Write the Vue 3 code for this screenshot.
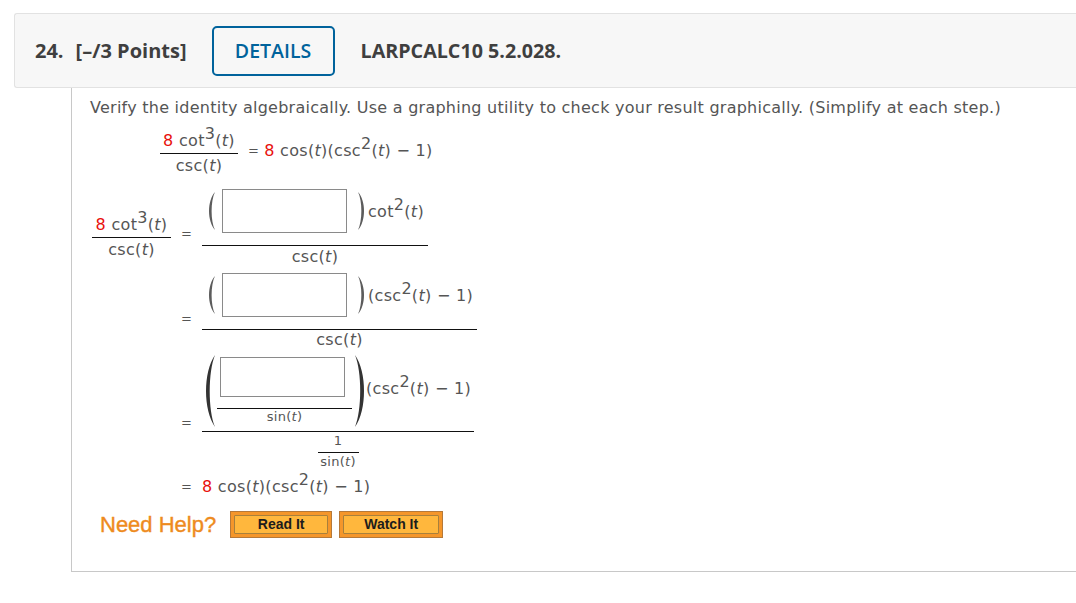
<template>
  <div class="page">
    <header class="question-head">
      <span class="num">24.</span>
      <span class="points">[–/3 Points]</span>
      <button class="details">DETAILS</button>
      <span class="code">LARPCALC10 5.2.028.</span>
    </header>

    <section class="question-body">
      <p class="prompt">Verify the identity algebraically. Use a graphing utility to check your result graphically. (Simplify at each step.)</p>

      <div class="identity">
        <div class="frac lhs">
          <div class="top"><span class="red">8</span> cot<sup>3</sup>(<i>t</i>)</div>
          <div class="bot">csc(<i>t</i>)</div>
        </div>
        <span class="eq-inline">=</span>
        <span class="rhs"><span class="red">8</span> cos(<i>t</i>)(csc<sup>2</sup>(<i>t</i>) − 1)</span>
      </div>

      <div class="steps">
        <div class="step step-a">
          <div class="frac lhs second">
            <div class="top"><span class="red">8</span> cot<sup>3</sup>(<i>t</i>)</div>
            <div class="bot">csc(<i>t</i>)</div>
          </div>
          <span class="eq">=</span>
          <div class="frac big">
            <div class="top row">
              <svg class="paren" width="16" height="38" viewBox="0 0 16 38"><path d="M10 0C2 9 2 29 10 38C5.500 29 5.500 9 10 0Z" /></svg>
              <input class="answer" type="text" />
              <svg class="paren close" width="16" height="38" viewBox="0 0 16 38"><path d="M5 0C13 9 13 29 5 38C9.500 29 9.500 9 5 0Z" /></svg>
              <span class="tail">cot<sup>2</sup>(<i>t</i>)</span>
            </div>
            <div class="bot">csc(<i>t</i>)</div>
          </div>
        </div>

        <div class="step step-b">
          <div class="spacer"></div>
          <span class="eq">=</span>
          <div class="frac big">
            <div class="top row">
              <svg class="paren" width="16" height="38" viewBox="0 0 16 38"><path d="M10 0C2 9 2 29 10 38C5.500 29 5.500 9 10 0Z" /></svg>
              <input class="answer" type="text" />
              <svg class="paren close" width="16" height="38" viewBox="0 0 16 38"><path d="M5 0C13 9 13 29 5 38C9.500 29 9.500 9 5 0Z" /></svg>
              <span class="tail">(csc<sup>2</sup>(<i>t</i>) − 1)</span>
            </div>
            <div class="bot">csc(<i>t</i>)</div>
          </div>
        </div>

        <div class="step step-c">
          <div class="spacer"></div>
          <span class="eq">=</span>
          <div class="frac big">
            <div class="top row tall">
              <svg class="paren-lg" width="15" height="72" viewBox="0 0 15 72"><path d="M12 0C0 17 0 55 12 72C5 55 5 17 12 0Z" /></svg>
              <div class="frac inner">
                <div class="top"><input class="answer short" type="text" /></div>
                <div class="bot small">sin(<i>t</i>)</div>
              </div>
              <svg class="paren-lg" width="15" height="72" viewBox="0 0 15 72"><path d="M3 0C15 17 15 55 3 72C10 55 10 17 3 0Z" /></svg>
              <span class="tail">(csc<sup>2</sup>(<i>t</i>) − 1)</span>
            </div>
            <div class="bot tiny-wrap">
              <div class="frac tiny">
                <div class="top small">1</div>
                <div class="bot small">sin(<i>t</i>)</div>
              </div>
            </div>
          </div>
        </div>

        <div class="step step-d">
          <div class="spacer"></div>
          <span class="eq">=</span>
          <span><span class="red">8</span> cos(<i>t</i>)(csc<sup>2</sup>(<i>t</i>) − 1)</span>
        </div>
      </div>

      <div class="help">
        <span class="need">Need Help?</span>
        <button v-for="label in helpLinks" :key="label" class="help-btn"><span>{{ label }}</span></button>
      </div>
    </section>
  </div>
</template>

<script setup>
const helpLinks = ['Read It', 'Watch It']
</script>

<style>
html, body { background: #fff; overflow: hidden; }
</style>

<style scoped>
.page {
  width: 1076px;
  height: 603px;
  padding-top: 13px;
  box-sizing: border-box;
  font-family: "DejaVu Sans", sans-serif;
  color: #555;
  overflow: hidden;
}

.question-head {
  margin-left: 14px;
  height: 75px;
  box-sizing: border-box;
  display: flex;
  align-items: center;
  background: #f7f7f7;
  border: 1px solid #e2e2e2;
  border-right: 0;
  border-radius: 3px 0 0 3px;
  font-family: "Open Sans", sans-serif;
  font-weight: 700;
  font-size: 20px;
  color: #3f3f3f;
  padding-left: 20px;
}
.points { margin-left: 12px; }
.details {
  margin-left: 25px;
  width: 123px;
  height: 50px;
  border: 2px solid #00639c;
  border-radius: 5px;
  background: #f7f7f7;
  color: #00639c;
  font: 600 19.5px "Open Sans", sans-serif;
  padding: 0;
}
.code { margin-left: 26px; font-size: 19.7px; }

.question-body {
  margin-left: 71px;
  height: 484px;
  box-sizing: border-box;
  border-left: 1px solid #c8c8c8;
  border-bottom: 1px solid #c8c8c8;
  padding-left: 18px;
  font-size: 16px;
  line-height: 20px;
}
.prompt {
  margin: 0;
  padding-top: 10px;
  white-space: nowrap;
  letter-spacing: 0.25px;
}

.identity, .steps { letter-spacing: 0.3px; }

.red { color: #e8100c; }
i { font-style: oblique; }
sup {
  font-size: 16px;
  line-height: 0;
  vertical-align: 7px;
}

.frac { display: inline-flex; flex-direction: column; text-align: center; }
.frac > .top { border-bottom: 1px solid #111; }
.small { font-size: 13px; line-height: 16px; }

.identity {
  display: flex;
  align-items: center;
  margin: 7px 0 0 70px;
  height: 56px;
}
.lhs { width: 78px; white-space: nowrap; }
.lhs .top { padding-bottom: 2px; }
.lhs .bot { padding-top: 2px; }
.eq-inline { margin: 0 5px 4px 10px; font-size: 13px; }
.rhs { margin-bottom: 4px; }

.steps { margin-top: 5px; }
.step { display: flex; align-items: flex-start; }
.spacer { width: 79px; flex: none; margin-left: 2px; }
.eq {
  width: 31px;
  flex: none;
  font-size: 13px;
  text-align: center;
}
.second { margin-left: 2px; flex: none; width: 79px; }

.step-a { height: 84px; }
.step-a .second { margin-top: 29px; }
.step-a > .eq { margin-top: 38px; }
.step-b { height: 84px; }
.step-b > .eq { margin-top: 39px; }
.step-b .big > .bot { padding-top: 0; }
.step-c { height: 120px; }
.step-c > .eq { margin-top: 59px; }
.step-d { height: 34px; align-items: center; padding-bottom: 9px; box-sizing: border-box; }

.big { white-space: nowrap; }
.row {
  display: flex;
  align-items: center;
  height: 60px;
  box-sizing: border-box;
  padding: 0 4px 0 3px;
}
.row.tall { height: 78px; padding-right: 3px; padding-left: 1px; }
.big > .bot { padding-top: 1px; }
.big > .tiny-wrap { display: flex; justify-content: center; padding-top: 1px; }
.paren { fill: #5c5c5c; flex: none; margin-bottom: 10px; }
.paren.close { margin-left: 6px; }
.paren-lg { fill: #333; flex: none; margin-bottom: 3px; }
.tail { margin-bottom: 7px; margin-left: -1px; }

.answer {
  display: block;
  width: 125px;
  height: 44px;
  box-sizing: border-box;
  margin: 0 0 10px 1px;
  border: 1px solid #8a8a8a;
  border-radius: 0;
  background: #fff;
  padding: 0;
}
.answer.short { height: 40px; margin: 0 7px 11px 3px; }
.inner { margin: 0 0 3px -1px; }
.tiny { width: 41px; }
.tiny .top { padding-bottom: 3px; }
.tiny .bot { padding-top: 1px; }

.help {
  display: flex;
  align-items: center;
  gap: 7px;
  margin: 3px 0 0 10px;
}
.need {
  font: 400 22px "Liberation Sans", sans-serif;
  -webkit-text-stroke: 0.4px #ee8b1e;
  color: #ee8b1e;
  margin-right: 7px;
}
.help-btn {
  width: 102px;
  height: 27px;
  padding: 3px;
  box-sizing: border-box;
  border: 1px solid #b5793a;
  background: #f5962a;
  display: flex;
}
.help-btn span {
  flex: 1;
  border: 1px solid #a8803c;
  border-radius: 1px;
  background: #ffb73d;
  color: #1c1c1c;
  font: 700 14px/17px "Liberation Sans", sans-serif;
}
.help-btn:last-child { width: 104px; }
</style>
